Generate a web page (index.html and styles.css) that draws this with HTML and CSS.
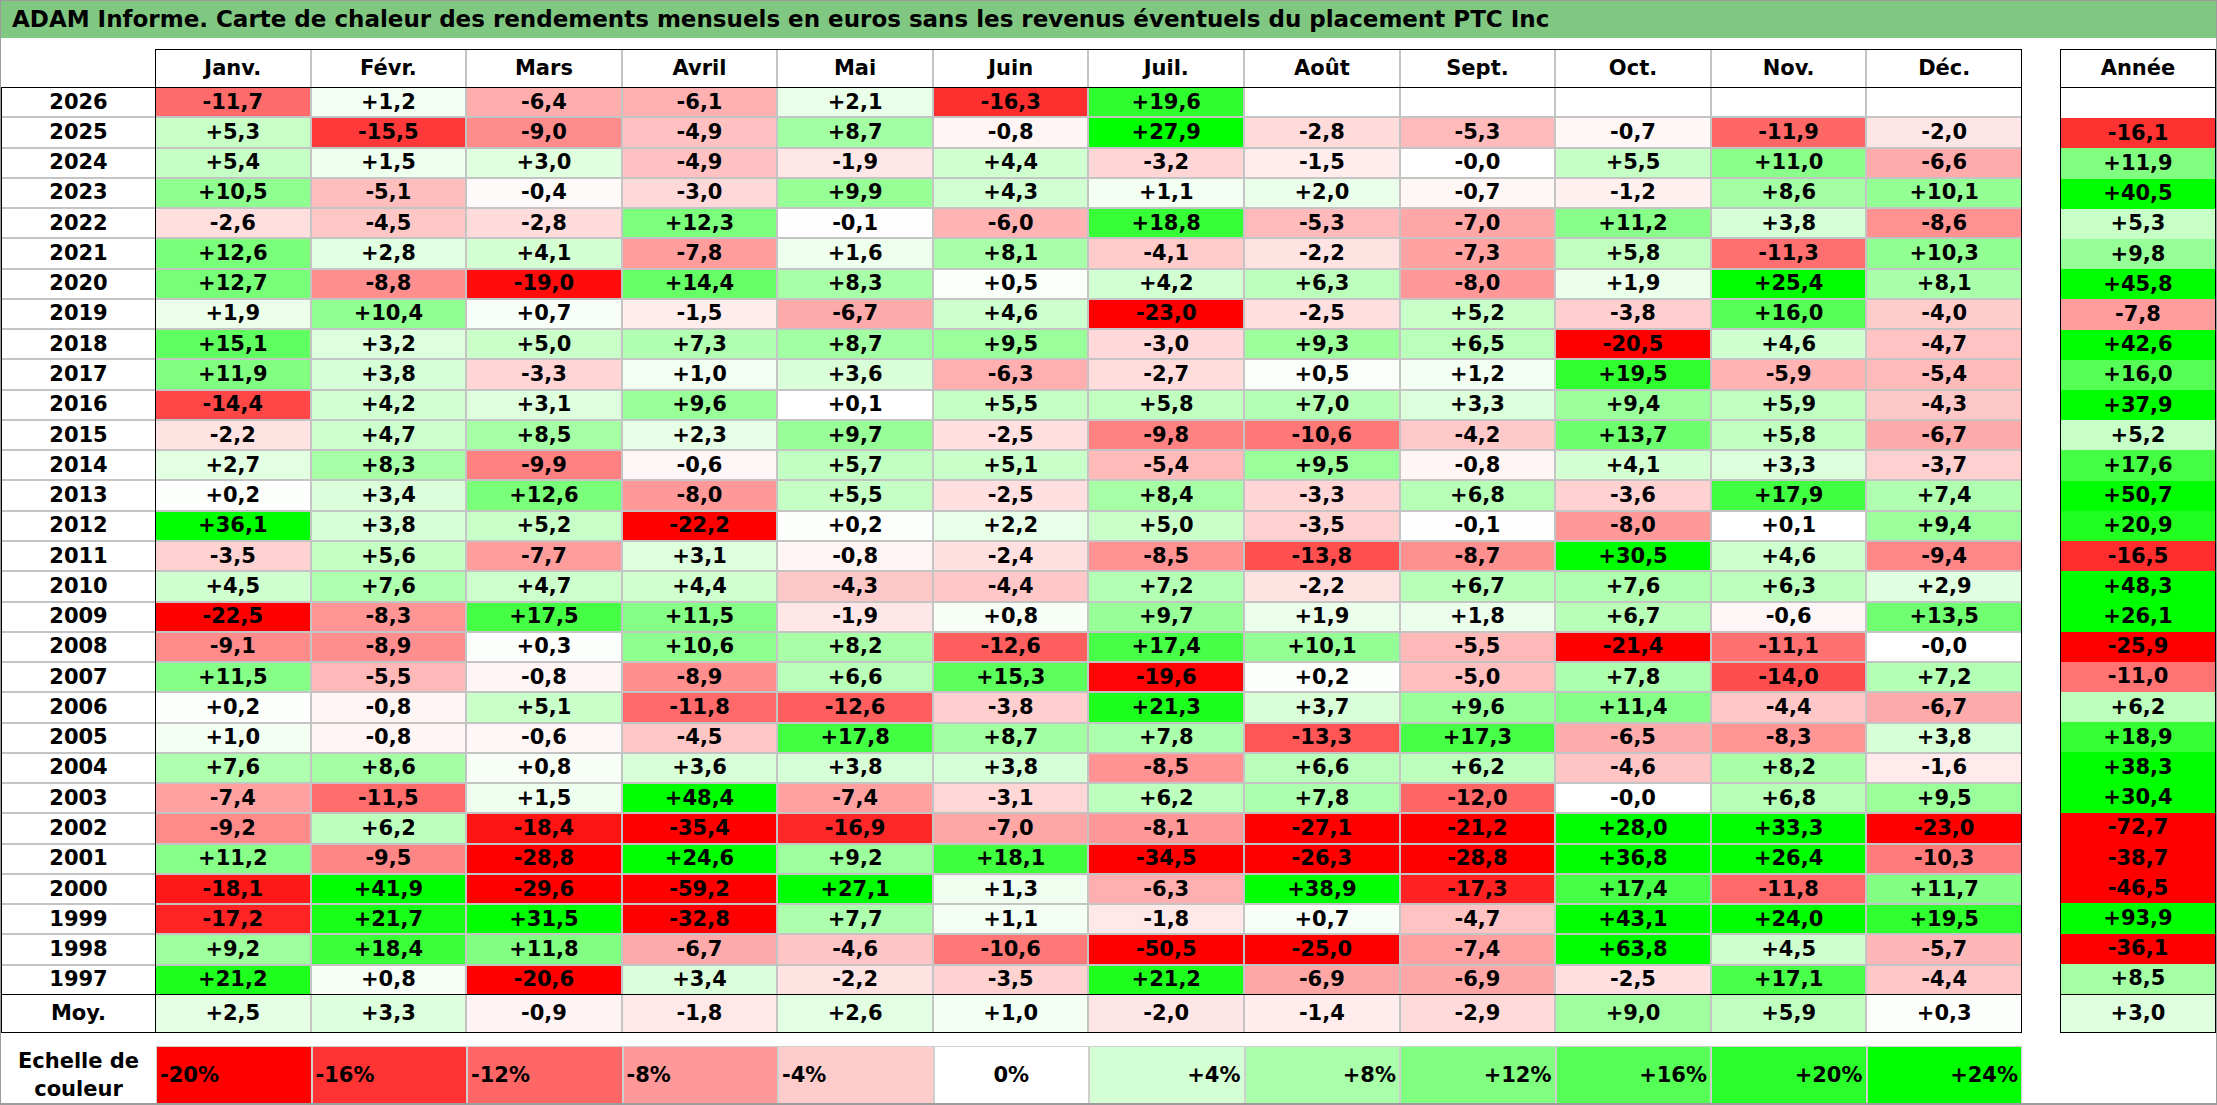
FILE: index.html
```html
<!DOCTYPE html>
<html lang="fr">
<head>
<meta charset="utf-8">
<title>ADAM Informe - PTC Inc</title>
<link rel="stylesheet" href="styles.css">
</head>
<body>
<div class="frame">
  <div class="title">ADAM Informe. Carte de chaleur des rendements mensuels en euros sans les revenus éventuels du placement PTC Inc</div>
  <div class="sheet">
    <div class="years">
      <div class="years-head"></div>
      <div class="years-box">
        <div class="years-body" id="yearsBody"></div>
        <div class="years-foot">Moy.</div>
      </div>
    </div>
    <div class="block months">
      <div class="head months-grid">
        <div class="hcell">Janv.</div>
        <div class="hcell">Févr.</div>
        <div class="hcell">Mars</div>
        <div class="hcell">Avril</div>
        <div class="hcell">Mai</div>
        <div class="hcell">Juin</div>
        <div class="hcell">Juil.</div>
        <div class="hcell">Août</div>
        <div class="hcell">Sept.</div>
        <div class="hcell">Oct.</div>
        <div class="hcell">Nov.</div>
        <div class="hcell">Déc.</div>
      </div>
      <div class="body months-grid months-body" id="monthsBody"></div>
      <div class="foot months-grid" id="monthsFoot"></div>
    </div>
    <div class="spacer"></div>
    <div class="block annual">
      <div class="head"><div class="hcell">Année</div></div>
      <div class="body annual-body" id="annualBody"></div>
      <div class="foot annual-foot" id="annualFoot"></div>
    </div>
  </div>
  <div class="legend">
    <div class="legend-label">Echelle de<br>couleur</div>
    <div class="legend-scale">
      <div class="lcell left l-m20">-20%</div>
      <div class="lcell left l-m16">-16%</div>
      <div class="lcell left l-m12">-12%</div>
      <div class="lcell left l-m8">-8%</div>
      <div class="lcell left l-m4">-4%</div>
      <div class="lcell center l-0">0%</div>
      <div class="lcell right l-p4">+4%</div>
      <div class="lcell right l-p8">+8%</div>
      <div class="lcell right l-p12">+12%</div>
      <div class="lcell right l-p16">+16%</div>
      <div class="lcell right l-p20">+20%</div>
      <div class="lcell right l-p24">+24%</div>
    </div>
  </div>
</div>
<script src="script.js"></script>
</body>
</html>
```

FILE: styles.css
```css
* { box-sizing: border-box; }

html, body {
  margin: 0;
  padding: 0;
  background: #ffffff;
}

body {
  font-family: "DejaVu Sans", "Lato", sans-serif;
  font-weight: 700;
  color: #000000;
}

.frame {
  width: 2217px;
  height: 1105px;
  border: 1px solid #9c9c9c;
  border-bottom-width: 2px;
  background: #ffffff;
  overflow: hidden;
}

.title {
  height: 37px;
  background: #80c882;
  font-size: 23px;
  line-height: 37px;
  padding-left: 11px;
  white-space: nowrap;
}

.sheet {
  display: flex;
  margin-top: 11px;
  height: 984px;
}

/* year labels column */
.years {
  width: 154px;
  display: flex;
  flex-direction: column;
}

.years-head {
  height: 38px;
}

.years-box {
  border-top: 1px solid #000;
  border-left: 1px solid #000;
  border-bottom: 1px solid #000;
}

.years-body {
  height: 906px;
  display: grid;
  grid-template-rows: repeat(30, minmax(0, 1fr));
  row-gap: 2px;
  background: #c4c4c4;
}

.ycell {
  background: #ffffff;
  display: flex;
  align-items: center;
  justify-content: center;
  font-size: 21px;
  line-height: 1;
  overflow: hidden;
}

.years-foot {
  height: 38px;
  border-top: 1px solid #000;
  display: flex;
  align-items: center;
  justify-content: center;
  font-size: 21px;
  line-height: 1;
}

/* bordered blocks */
.block {
  border: 1px solid #000;
  display: flex;
  flex-direction: column;
}

.months { width: 1867px; }
.annual { width: 156px; }
.spacer { width: 38px; }

.months-grid {
  display: grid;
  grid-template-columns: repeat(12, minmax(0, 1fr));
  column-gap: 2px;
  background: #c4c4c4;
}

.head {
  height: 38px;
  border-bottom: 1px solid #000;
}

.annual .head {
  display: flex;
}

.hcell {
  flex: 1;
  background: #ffffff;
  display: flex;
  align-items: center;
  justify-content: center;
  font-size: 21px;
  line-height: 1;
}

.body {
  height: 907px;
  border-bottom: 1px solid #000;
}

.months-body {
  grid-template-rows: repeat(30, minmax(0, 1fr));
  row-gap: 2px;
}

.annual-body {
  display: grid;
  grid-template-rows: repeat(30, minmax(0, 1fr));
  background: #ffffff;
}

.foot {
  height: 37px;
}

.annual-foot {
  display: flex;
}

.cell {
  background: #ffffff;
  display: flex;
  align-items: center;
  justify-content: center;
  font-size: 21px;
  line-height: 1;
  white-space: nowrap;
  overflow: hidden;
}

.annual-foot .cell { flex: 1; }

/* legend */
.legend {
  display: flex;
  margin-top: 13px;
  height: 57px;
}

.legend-label {
  width: 155px;
  display: flex;
  align-items: center;
  justify-content: center;
  text-align: center;
  font-size: 21px;
  line-height: 28px;
}

.legend-scale {
  width: 1866px;
  display: grid;
  grid-template-columns: repeat(12, minmax(0, 1fr));
  column-gap: 2px;
  background: #cfcfcf;
  border-top: 1px solid #cfcfcf;
  border-right: 1px solid #cfcfcf;
  border-left: 1px solid #cfcfcf;
}

.lcell {
  display: flex;
  align-items: center;
  font-size: 21px;
  padding: 0 3px;
}

.lcell.left { justify-content: flex-start; }
.lcell.center { justify-content: center; }
.lcell.right { justify-content: flex-end; }

.l-m20 { background: rgb(255, 0, 0); }
.l-m16 { background: rgb(255, 51, 51); }
.l-m12 { background: rgb(255, 102, 102); }
.l-m8  { background: rgb(255, 153, 153); }
.l-m4  { background: rgb(255, 204, 204); }
.l-0   { background: #ffffff; }
.l-p4  { background: rgb(212, 255, 212); }
.l-p8  { background: rgb(170, 255, 170); }
.l-p12 { background: rgb(128, 255, 128); }
.l-p16 { background: rgb(85, 255, 85); }
.l-p20 { background: rgb(43, 255, 43); }
.l-p24 { background: rgb(0, 255, 0); }
```

FILE: script.js
```js
(function () {
  var N = null;
  var rows = [
    [2026, [-11.7, 1.2, -6.4, -6.1, 2.1, -16.3, 19.6, N, N, N, N, N], N],
    [2025, [5.3, -15.5, -9.0, -4.9, 8.7, -0.8, 27.9, -2.8, -5.3, -0.7, -11.9, -2.0], -16.1],
    [2024, [5.4, 1.5, 3.0, -4.9, -1.9, 4.4, -3.2, -1.5, -0, 5.5, 11.0, -6.6], 11.9],
    [2023, [10.5, -5.1, -0.4, -3.0, 9.9, 4.3, 1.1, 2.0, -0.7, -1.2, 8.6, 10.1], 40.5],
    [2022, [-2.6, -4.5, -2.8, 12.3, -0.1, -6.0, 18.8, -5.3, -7.0, 11.2, 3.8, -8.6], 5.3],
    [2021, [12.6, 2.8, 4.1, -7.8, 1.6, 8.1, -4.1, -2.2, -7.3, 5.8, -11.3, 10.3], 9.8],
    [2020, [12.7, -8.8, -19.0, 14.4, 8.3, 0.5, 4.2, 6.3, -8.0, 1.9, 25.4, 8.1], 45.8],
    [2019, [1.9, 10.4, 0.7, -1.5, -6.7, 4.6, -23.0, -2.5, 5.2, -3.8, 16.0, -4.0], -7.8],
    [2018, [15.1, 3.2, 5.0, 7.3, 8.7, 9.5, -3.0, 9.3, 6.5, -20.5, 4.6, -4.7], 42.6],
    [2017, [11.9, 3.8, -3.3, 1.0, 3.6, -6.3, -2.7, 0.5, 1.2, 19.5, -5.9, -5.4], 16.0],
    [2016, [-14.4, 4.2, 3.1, 9.6, 0.1, 5.5, 5.8, 7.0, 3.3, 9.4, 5.9, -4.3], 37.9],
    [2015, [-2.2, 4.7, 8.5, 2.3, 9.7, -2.5, -9.8, -10.6, -4.2, 13.7, 5.8, -6.7], 5.2],
    [2014, [2.7, 8.3, -9.9, -0.6, 5.7, 5.1, -5.4, 9.5, -0.8, 4.1, 3.3, -3.7], 17.6],
    [2013, [0.2, 3.4, 12.6, -8.0, 5.5, -2.5, 8.4, -3.3, 6.8, -3.6, 17.9, 7.4], 50.7],
    [2012, [36.1, 3.8, 5.2, -22.2, 0.2, 2.2, 5.0, -3.5, -0.1, -8.0, 0.1, 9.4], 20.9],
    [2011, [-3.5, 5.6, -7.7, 3.1, -0.8, -2.4, -8.5, -13.8, -8.7, 30.5, 4.6, -9.4], -16.5],
    [2010, [4.5, 7.6, 4.7, 4.4, -4.3, -4.4, 7.2, -2.2, 6.7, 7.6, 6.3, 2.9], 48.3],
    [2009, [-22.5, -8.3, 17.5, 11.5, -1.9, 0.8, 9.7, 1.9, 1.8, 6.7, -0.6, 13.5], 26.1],
    [2008, [-9.1, -8.9, 0.3, 10.6, 8.2, -12.6, 17.4, 10.1, -5.5, -21.4, -11.1, -0], -25.9],
    [2007, [11.5, -5.5, -0.8, -8.9, 6.6, 15.3, -19.6, 0.2, -5.0, 7.8, -14.0, 7.2], -11.0],
    [2006, [0.2, -0.8, 5.1, -11.8, -12.6, -3.8, 21.3, 3.7, 9.6, 11.4, -4.4, -6.7], 6.2],
    [2005, [1.0, -0.8, -0.6, -4.5, 17.8, 8.7, 7.8, -13.3, 17.3, -6.5, -8.3, 3.8], 18.9],
    [2004, [7.6, 8.6, 0.8, 3.6, 3.8, 3.8, -8.5, 6.6, 6.2, -4.6, 8.2, -1.6], 38.3],
    [2003, [-7.4, -11.5, 1.5, 48.4, -7.4, -3.1, 6.2, 7.8, -12.0, -0, 6.8, 9.5], 30.4],
    [2002, [-9.2, 6.2, -18.4, -35.4, -16.9, -7.0, -8.1, -27.1, -21.2, 28.0, 33.3, -23.0], -72.7],
    [2001, [11.2, -9.5, -28.8, 24.6, 9.2, 18.1, -34.5, -26.3, -28.8, 36.8, 26.4, -10.3], -38.7],
    [2000, [-18.1, 41.9, -29.6, -59.2, 27.1, 1.3, -6.3, 38.9, -17.3, 17.4, -11.8, 11.7], -46.5],
    [1999, [-17.2, 21.7, 31.5, -32.8, 7.7, 1.1, -1.8, 0.7, -4.7, 43.1, 24.0, 19.5], 93.9],
    [1998, [9.2, 18.4, 11.8, -6.7, -4.6, -10.6, -50.5, -25.0, -7.4, 63.8, 4.5, -5.7], -36.1],
    [1997, [21.2, 0.8, -20.6, 3.4, -2.2, -3.5, 21.2, -6.9, -6.9, -2.5, 17.1, -4.4], 8.5]
  ];
  var avg = [2.5, 3.3, -0.9, -1.8, 2.6, 1.0, -2.0, -1.4, -2.9, 9.0, 5.9, 0.3];
  var avgYear = 3.0;

  function isNeg(v) { return v < 0 || Object.is(v, -0); }

  function fmt(v) {
    return (isNeg(v) ? '-' : '+') + Math.abs(v).toFixed(1).replace('.', ',');
  }

  function color(v) {
    var t, c;
    if (isNeg(v)) {
      t = Math.min(-v / 20, 1);
      c = Math.round(255 * (1 - t));
      return 'rgb(255,' + c + ',' + c + ')';
    }
    t = Math.min(v / 24, 1);
    c = Math.round(255 * (1 - t));
    return 'rgb(' + c + ',255,' + c + ')';
  }

  function cell(v) {
    var d = document.createElement('div');
    d.className = 'cell';
    if (v !== null) {
      d.textContent = fmt(v);
      d.style.background = color(v);
    }
    return d;
  }

  var yearsBody = document.getElementById('yearsBody');
  var monthsBody = document.getElementById('monthsBody');
  var annualBody = document.getElementById('annualBody');
  var monthsFoot = document.getElementById('monthsFoot');
  var annualFoot = document.getElementById('annualFoot');

  rows.forEach(function (r) {
    var y = document.createElement('div');
    y.className = 'ycell';
    y.textContent = r[0];
    yearsBody.appendChild(y);
    r[1].forEach(function (v) { monthsBody.appendChild(cell(v)); });
    annualBody.appendChild(cell(r[2]));
  });

  avg.forEach(function (v) { monthsFoot.appendChild(cell(v)); });
  annualFoot.appendChild(cell(avgYear));
})();
```
